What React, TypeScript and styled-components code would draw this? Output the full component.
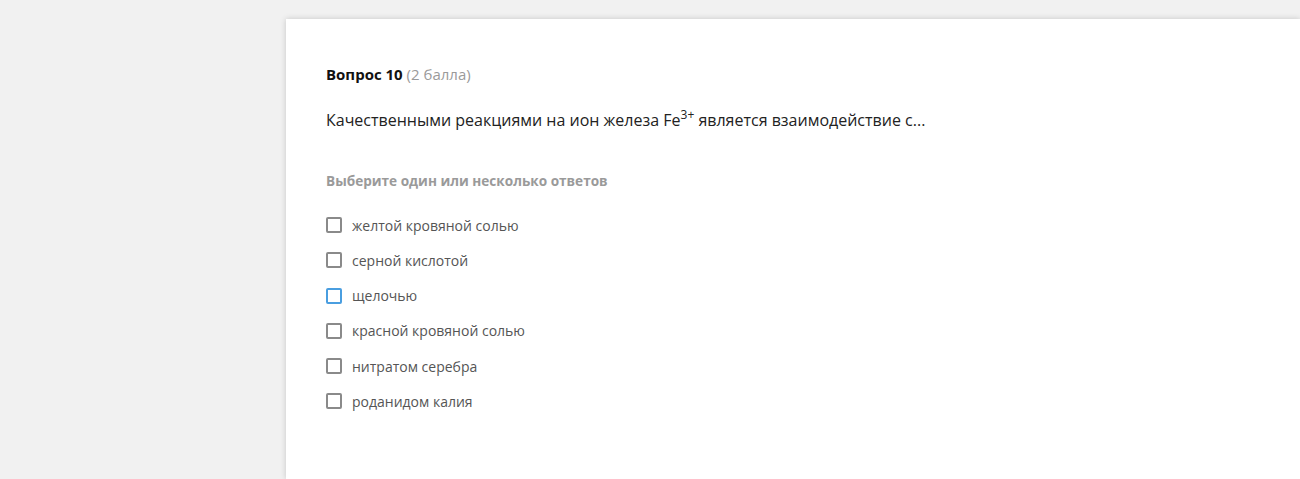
import styled, { createGlobalStyle } from 'styled-components';

const GlobalStyle = createGlobalStyle`
  html, body {
    margin: 0;
    padding: 0;
    background: #f1f1f1;
    overflow: hidden;
    font-family: "Open Sans", "Noto Sans", sans-serif;
  }
`

const Page = styled.div`
  height: 479px;
  padding: 19px 0 0 286px;
  box-sizing: border-box;
  overflow: hidden;
`

const Card = styled.section`
  width: 1014px;
  height: 460px;
  background: #ffffff;
  box-shadow: 0 0 6px rgba(0, 0, 0, 0.18);
  padding: 45px 40px 0;
  box-sizing: border-box;
`

const Title = styled.h3`
  margin: 0;
  font-size: 15px;
  line-height: 20px;
  font-weight: 700;
  color: #111111;
`

const Points = styled.span`
  font-weight: 400;
  color: #9a9a9a;
`

const Question = styled.p`
  margin: 25px 0 0;
  font-size: 16px;
  line-height: 22px;
  color: #222222;

  sup {
    font-size: 12px;
    line-height: 0;
    vertical-align: 7px;
  }
`

const Hint = styled.p`
  margin: 40px 0 0;
  font-size: 13.6px;
  line-height: 20px;
  font-weight: 700;
  color: #9a9a9a;
`

const List = styled.ul`
  list-style: none;
  margin: 24px 0 0;
  padding: 0;
  display: flex;
  flex-direction: column;
  gap: 15.3px;
`

const Option = styled.li`
  display: flex;
  align-items: center;
  gap: 10px;
  height: 20px;
  font-size: 14px;
  color: #555555;
`

const Box = styled.span<{ $focused?: boolean }>`
  width: 16px;
  height: 16px;
  box-sizing: border-box;
  border: 2px solid ${(p) => (p.$focused ? '#4a9ee0' : '#8a8a8a')};
  border-radius: 2px;
  flex-shrink: 0;
`

const answers = [
  'желтой кровяной солью',
  'серной кислотой',
  'щелочью',
  'красной кровяной солью',
  'нитратом серебра',
  'роданидом калия',
]

const App = () => {
  return (
    <Page>
      <GlobalStyle />
      <Card>
        <Title>
          Вопрос 10 <Points>(2 балла)</Points>
        </Title>
        <Question>
          Качественными реакциями на ион железа Fe<sup>3+</sup> является взаимодействие с...
        </Question>
        <Hint>Выберите один или несколько ответов</Hint>
        <List>
          {answers.map((a, i) => (
            <Option key={a}>
              <Box $focused={i === 2} />
              {a}
            </Option>
          ))}
        </List>
      </Card>
    </Page>
  );
};

export default App;
